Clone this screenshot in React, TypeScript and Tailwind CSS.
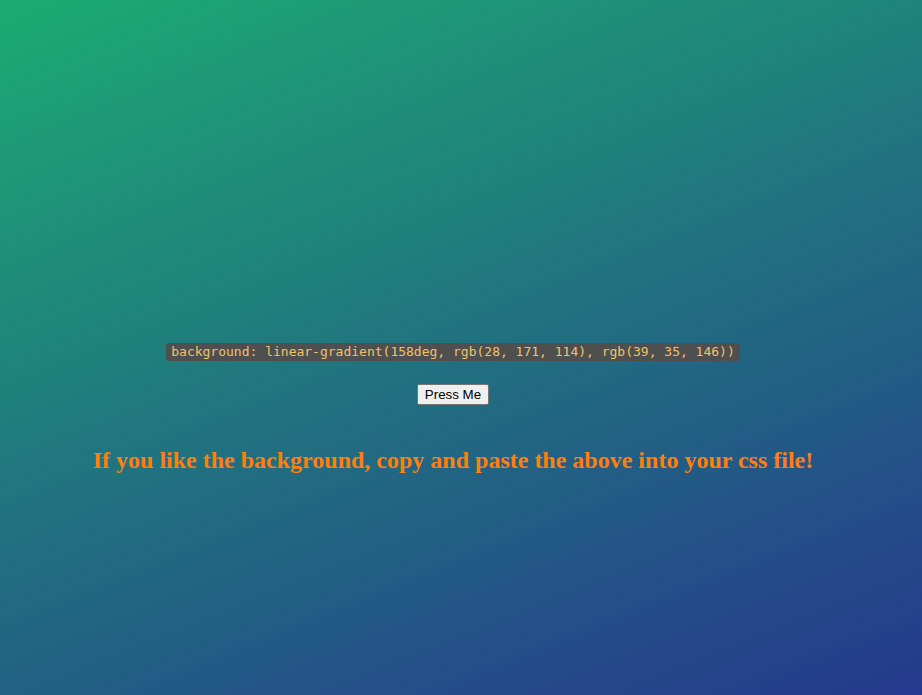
import React from "react";

export default function App() {
  return (
    <div className="h-[695px] w-[922px] overflow-hidden bg-[linear-gradient(158deg,rgb(28,171,114),rgb(39,35,146))] bg-[length:922px_889px] bg-no-repeat">
      <div className="flex w-[906px] flex-col items-center pt-[343px]">
        <code className="rounded-[3px] bg-[#4f4f4f] px-[5px] py-[2px] text-[13px] leading-[14px] text-[#f0c36a] [font-family:'DejaVu_Sans_Mono',monospace]">
          background: linear-gradient(158deg, rgb(28, 171, 114), rgb(39, 35, 146))
        </code>
        <button className="mt-[23px] h-[21px] rounded-[2px] border border-[#767676] bg-[#efefef] px-[7px] text-[13.33px] leading-[15px] text-black [font-family:'Liberation_Sans',Arial,sans-serif]">
          Press Me
        </button>
        <h2 className="mt-[41px] text-[24px] font-bold leading-[28px] text-[#ff7f0e] [font-family:'Liberation_Serif','Times_New_Roman',serif]">
          If you like the background, copy and paste the above into your css file!
        </h2>
      </div>
    </div>
  );
}
